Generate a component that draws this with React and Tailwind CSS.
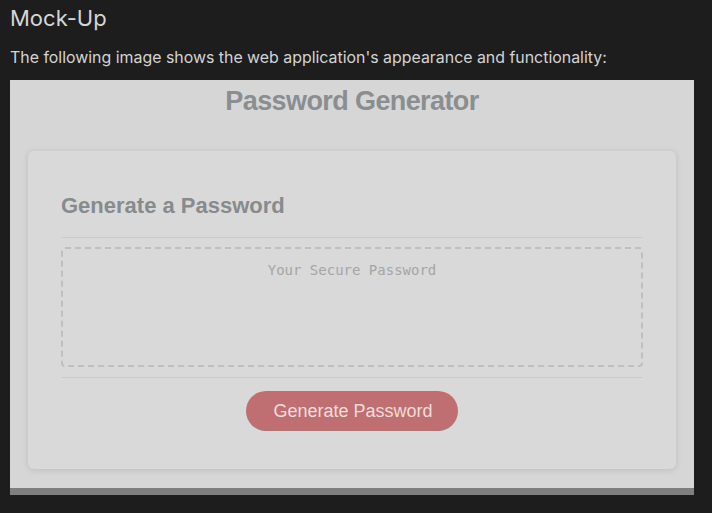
import React from "react";

export default function App() {
    return (
        <div className="min-h-[513px] bg-[#1d1d1d] px-[10px] pt-[3px] font-['Inter','Liberation_Sans',sans-serif]">
            <h1 className="text-[22px] leading-[30px] text-[#d6d6d6]">Mock-Up</h1>
            <p className="mt-[14px] text-[15.9px] leading-[22px] text-[#d4d4d4]">
                The following image shows the web application's appearance and functionality:
            </p>

            <div className="mt-[11px] w-[684px] bg-[#d6d6d6] font-['Liberation_Sans',Arial,sans-serif]">
                <h2 className="pt-[6px] text-center text-[27px] font-bold leading-[31px] tracking-[-0.6px] text-[#8a8e91]">
                    Password Generator
                </h2>

                <div className="px-[18px] pt-[34px] pb-[19px]">
                    <div className="rounded-[6px] bg-[#d9d9d9] px-[33px] pt-[40px] pb-[38px] shadow-[0_1px_6px_rgba(0,0,0,0.12)]">
                        <h3 className="text-[22px] font-bold leading-[30px] text-[#878b8e]">
                            Generate a Password
                        </h3>
                        <div className="mt-[16px] border-t border-[#cbcbcb]" />
                        <div className="mt-[9px] h-[120px] rounded-[4px] border-2 border-dashed border-[#bcc0c3] pt-[12px] text-center font-['DejaVu_Sans_Mono',monospace] text-[14px] leading-[18px] text-[#a5a5a5]">
                            Your Secure Password
                        </div>
                        <div className="mt-[10px] border-t border-[#cbcbcb]" />
                        <div className="mt-[13px] flex justify-center">
                            <button className="h-[40px] w-[212px] rounded-full bg-[#bf6f71] pl-[2px] text-[18px] text-[#efdcdc]">
                                Generate Password
                            </button>
                        </div>
                    </div>
                </div>
                <div className="h-[7px] bg-[#7f7f7f]" />
            </div>
        </div>
    );
}
